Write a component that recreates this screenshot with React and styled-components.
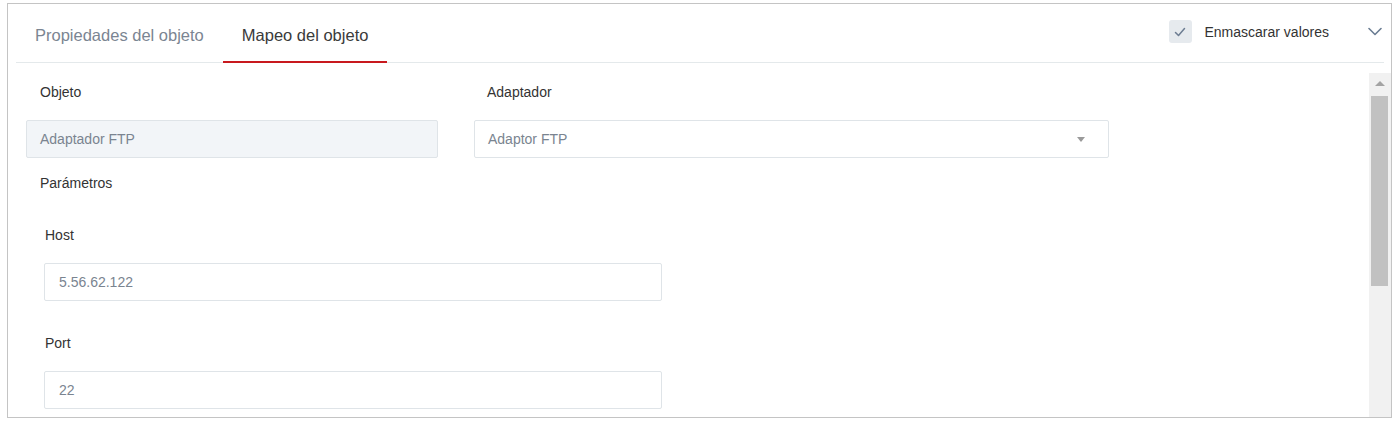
import styled, { createGlobalStyle } from "styled-components";

const GlobalStyle = createGlobalStyle`
  html, body {
    margin: 0;
    overflow: hidden;
    background: #ffffff;
  }
  body {
    padding: 3px 6px 0 7px;
    font-family: "Liberation Sans", Arial, sans-serif;
  }
`;

const Panel = styled.section`
  position: relative;
  box-sizing: border-box;
  height: 415px;
  padding: 1px 1px 0 1px;
  display: flex;
  flex-direction: column;

  &::after {
    content: "";
    position: absolute;
    inset: 0;
    border: 1px solid #c4c4c4;
    pointer-events: none;
    z-index: 2;
  }
`;

const Header = styled.header`
  box-sizing: border-box;
  height: 59px;
  margin: 0 7px 0 8px;
  display: flex;
  align-items: flex-start;
  border-bottom: 1px solid #e4e9eb;
  flex-shrink: 0;
`;

const Tab = styled.button`
  box-sizing: border-box;
  height: 59px;
  padding: 6px 19px 0;
  display: flex;
  align-items: center;
  background: none;
  border: none;
  border-bottom: 2px solid ${({ $active }) => ($active ? "#c8191e" : "transparent")};
  font-family: inherit;
  font-size: 16.5px;
  color: ${({ $active }) => ($active ? "#3a3a3a" : "#7b8592")};
  cursor: pointer;
`;

const Tools = styled.div`
  margin-left: auto;
  margin-top: 16px;
  height: 23px;
  display: flex;
  align-items: center;
`;

const CheckBox = styled.span`
  width: 23px;
  height: 23px;
  border-radius: 3px;
  background: #e6eaee;
  display: flex;
  align-items: center;
  justify-content: center;
`;

const CheckLabel = styled.span`
  margin-left: 13px;
  font-size: 14px;
  color: #333333;
`;

const Collapse = styled.span`
  margin-left: 39px;
  margin-right: 2px;
  display: flex;
  align-items: center;
`;

const Scroller = styled.div`
  margin: 10px 0 0 8px;
  height: 351px;
  flex-shrink: 0;
  display: flex;
  overflow: hidden;
`;

const Content = styled.div`
  flex: 1;
  padding: 9px 0 0 10px;
`;

const ScrollTrack = styled.div`
  width: 22px;
  flex-shrink: 0;
  background: #f1f1f1;
  display: flex;
  flex-direction: column;
`;

const ScrollArrow = styled.div`
  height: 23px;
  display: flex;
  align-items: center;
  justify-content: center;

  &::before {
    content: "";
    width: 0;
    height: 0;
    margin-top: -2px;
    border-left: 5px solid transparent;
    border-right: 5px solid transparent;
    border-bottom: 5px solid #a3a3a3;
  }
`;

const ScrollThumb = styled.div`
  height: ${({ $h }) => $h}px;
  margin: 0 3px 0 2px;
  background: #c1c1c1;
`;

const TopRow = styled.div`
  display: flex;
  gap: 36px;
`;

const Field = styled.div`
  width: ${({ $w }) => $w}px;
  display: flex;
  flex-direction: column;
`;

const Label = styled.label`
  display: block;
  font-size: 14px;
  line-height: 20px;
  color: #333333;
  padding-left: ${({ $indent }) => $indent ?? 14}px;
  margin-bottom: 18px;
`;

const Input = styled.div`
  box-sizing: border-box;
  height: 38px;
  padding: 0 14px 0 ${({ $pad }) => $pad ?? 13}px;
  display: flex;
  align-items: center;
  border: 1px solid #dfe4e8;
  border-radius: 2px;
  background: ${({ $readonly }) => ($readonly ? "#f2f5f8" : "#ffffff")};
  font-size: 14px;
  color: #7a8490;
`;

const Caret = styled.span`
  margin-left: auto;
  margin-right: 9px;
  width: 0;
  height: 0;
  border-left: 4px solid transparent;
  border-right: 4px solid transparent;
  border-top: 5px solid #9a9a9a;
`;

const Section = styled.div`
  margin-top: 15px;
`;

const SectionTitle = styled.div`
  font-size: 14px;
  line-height: 20px;
  color: #333333;
  padding-left: 14px;
`;

const Params = styled.div`
  padding: 32px 0 0 18px;
  display: flex;
  flex-direction: column;
  gap: 32px;
`;

const params = [
  { name: "Host", value: "5.56.62.122" },
  { name: "Port", value: "22" },
];

export default function App() {
  return (
    <>
      <GlobalStyle />
      <Panel>
        <Header>
          <Tab>Propiedades del objeto</Tab>
          <Tab $active>Mapeo del objeto</Tab>
          <Tools>
            <CheckBox>
              <svg width="12" height="12" viewBox="0 0 12 12">
                <polyline
                  points="1.5,6.5 4.5,9.5 10.5,2.5"
                  fill="none"
                  stroke="#6d7d92"
                  strokeWidth="1.5"
                  strokeLinecap="round"
                  strokeLinejoin="round"
                />
              </svg>
            </CheckBox>
            <CheckLabel>Enmascarar valores</CheckLabel>
            <Collapse>
              <svg width="14" height="9" viewBox="0 0 14 9">
                <polyline
                  points="1,1.5 7,7.5 13,1.5"
                  fill="none"
                  stroke="#6b7d93"
                  strokeWidth="1.6"
                  strokeLinecap="round"
                  strokeLinejoin="round"
                />
              </svg>
            </Collapse>
          </Tools>
        </Header>

        <Scroller>
          <Content>
            <TopRow>
              <Field $w={412}>
                <Label>Objeto</Label>
                <Input $readonly $pad={13}>Adaptador FTP</Input>
              </Field>
              <Field $w={635}>
                <Label $indent={13}>Adaptador</Label>
                <Input $pad={13}>
                  Adaptor FTP
                  <Caret />
                </Input>
              </Field>
            </TopRow>

            <Section>
              <SectionTitle>Parámetros</SectionTitle>
              <Params>
                {params.map((p) => (
                  <Field key={p.name} $w={618}>
                    <Label $indent={1}>{p.name}</Label>
                    <Input $pad={14}>{p.value}</Input>
                  </Field>
                ))}
              </Params>
            </Section>
          </Content>
          <ScrollTrack>
            <ScrollArrow />
            <ScrollThumb $h={190} />
          </ScrollTrack>
        </Scroller>
      </Panel>
    </>
  );
}
